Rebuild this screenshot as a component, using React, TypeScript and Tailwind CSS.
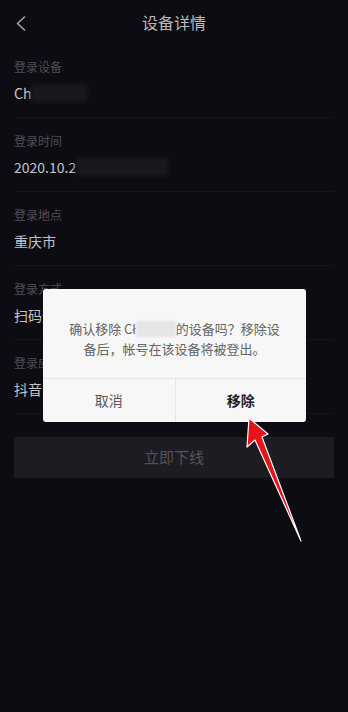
import React from "react";

const rows = [
  { label: "登录设备", value: "Ch", blur: "w-[56px]" },
  { label: "登录时间", value: "2020.10.2", blur: "w-[92px]" },
  { label: "登录地点", value: "重庆市", blur: "" },
  { label: "登录方式", value: "扫码登录", blur: "" },
  { label: "登录应用", value: "抖音", blur: "" },
];

export default function App() {
  return (
    <div
      className="relative w-[348px] h-[712px] overflow-hidden bg-[#0c0c12]"
      style={{ fontFamily: '"Noto Sans CJK SC", "Noto Sans", sans-serif' }}
    >
      {/* header */}
      <div className="relative h-[44px] flex items-center justify-center">
        <svg
          className="absolute left-[15px] top-[16px]"
          width="12"
          height="15"
          viewBox="0 0 12 15"
          fill="none"
        >
          <path d="M9.5 1 L2.5 7.5 L9.5 14" stroke="#a4a4a8" strokeWidth="1.6" strokeLinecap="round" strokeLinejoin="round" />
        </svg>
        <span className="text-[16px] text-[#b9b9bc]">设备详情</span>
      </div>

      {/* detail rows */}
      <div className="px-[14px]">
        {rows.map((r) => (
          <div key={r.label} className="pt-[14px] pb-[13px] border-b border-[#141419]">
            <div className="text-[12px] leading-[18px] text-[#4f4f56]">{r.label}</div>
            <div className="mt-[6px] flex items-center text-[14px] leading-[22px] text-[#c4c4c6]">
              <span>{r.value}</span>
              {r.blur && <span className={`${r.blur} h-[18px] bg-[#18181e] blur-[2px]`} />}
            </div>
          </div>
        ))}

        <div className="mt-[23px] h-[41px] flex items-center justify-center bg-[#1c1c22] text-[15px] text-[#55555b]">
          立即下线
        </div>
      </div>

      {/* confirm dialog */}
      <div className="absolute left-[43px] top-[289px] w-[263px] bg-[#f7f7f7] rounded-[3px] overflow-hidden">
        <div className="pt-[30px] pb-[19px] px-[20px] text-center text-[13px] leading-[20px] text-[#646464]">
          <div className="flex items-center justify-center whitespace-nowrap">
            <span>确认移除 Cł</span>
            <span className="w-[40px] h-[16px] bg-[#e6e6e6] blur-[1px]" />
            <span>的设备吗？移除设</span>
          </div>
          <div>备后，帐号在该设备将被登出。</div>
        </div>
        <div className="grid grid-cols-2 h-[44px] border-t border-[#e6e6e6]">
          <div className="flex items-center justify-center text-[14px] text-[#585858]">取消</div>
          <div className="flex items-center justify-center text-[14px] font-bold text-[#1e1e1e] border-l border-[#e6e6e6]">
            移除
          </div>
        </div>
      </div>

      {/* red annotation arrow */}
      <svg className="absolute inset-0 pointer-events-none" width="348" height="712" viewBox="0 0 348 712">
        <polygon
          points="249,418 268,434 262,437 301,541 255,440 247,447"
          fill="#e5141b"
          stroke="#ffffff"
          strokeWidth="1.2"
          strokeLinejoin="round"
        />
      </svg>
    </div>
  );
}
